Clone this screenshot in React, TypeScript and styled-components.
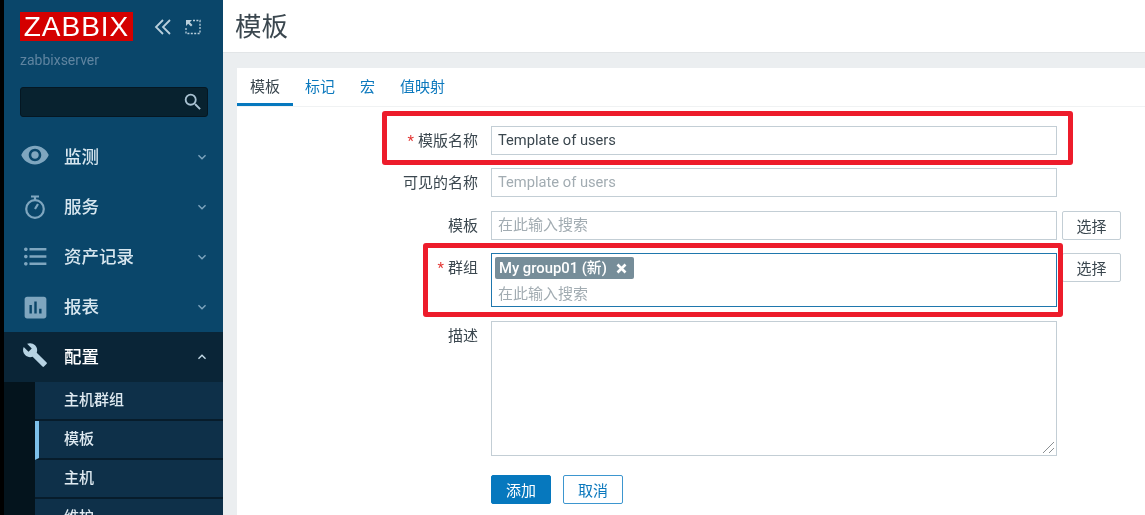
import { createGlobalStyle, styled } from 'styled-components';
import {
  MdAssessment,
  MdBuild,
  MdExpandLess,
  MdExpandMore,
  MdFormatListBulleted,
  MdRemoveRedEye,
  MdSearch,
} from 'react-icons/md';

const CJK = `Roboto, 'Noto Sans CJK SC', sans-serif`;

const GlobalStyle = createGlobalStyle`
  html, body {
    margin: 0;
    padding: 0;
    background: #ebeef0;
  }
  * {
    box-sizing: border-box;
  }
`;

const Page = styled.div`
  display: flex;
  width: 1145px;
  height: 515px;
  overflow: hidden;
  font-family: ${CJK};
  filter: blur(0.25px);
`;

const Sidebar = styled.aside`
  width: 223px;
  flex-shrink: 0;
  border-left: 4px solid #000;
  background: #0a466a;
  display: flex;
  flex-direction: column;
`;

const Brand = styled.div`
  flex-shrink: 0;
  display: flex;
  align-items: center;
  padding: 12px 0 0 16px;
`;

const Logo = styled.div`
  width: 113px;
  height: 29px;
  background: #d40000;
  color: #fff;
  font-family: 'Liberation Sans', sans-serif;
  font-size: 28px;
  line-height: 30px;
  letter-spacing: 1px;
  text-align: center;
`;

const BrandIcon = styled.svg<{ $gap: number }>`
  margin-left: ${(p) => p.$gap}px;
  color: #b9cfdc;
`;

const ServerName = styled.div`
  flex-shrink: 0;
  margin: 10px 0 0 16px;
  color: #5f84a0;
  font-size: 14px;
  line-height: 18px;
`;

const SearchBox = styled.div`
  flex-shrink: 0;
  margin: 18px 0 0 16px;
  width: 188px;
  height: 30px;
  background: #08222f;
  border: 1px solid #051722;
  border-radius: 3px;
  display: flex;
  justify-content: flex-end;
  align-items: center;
  padding-right: 3px;
  color: #a9c2d2;
  font-size: 22px;
`;

const Nav = styled.nav`
  flex-shrink: 0;
  margin-top: 15px;
  display: flex;
  flex-direction: column;
`;

const NavItem = styled.div<{ $open?: boolean }>`
  height: 50px;
  display: flex;
  align-items: center;
  background: ${(p) => (p.$open ? '#0a2537' : 'transparent')};
  color: ${(p) => (p.$open ? '#fff' : '#d7e6ef')};
  font-size: 17.5px;
  font-weight: 500;
`;

const NavIcon = styled.span<{ $open?: boolean; $lift?: number }>`
  width: 60px;
  flex-shrink: 0;
  padding-left: 2px;
  margin-bottom: ${(p) => p.$lift ?? 0}px;
  display: flex;
  justify-content: center;
  align-items: center;
  color: ${(p) => (p.$open ? '#b7d3e3' : '#7fa6bf')};
`;

const NavLabel = styled.span`
  flex: 1;
  margin-bottom: 3px;
`;

const NavChevron = styled.span<{ $open?: boolean }>`
  width: 24px;
  margin-right: 9px;
  display: flex;
  justify-content: center;
  font-size: 16px;
  color: ${(p) => (p.$open ? '#c5dbe8' : '#7fa6bf')};
`;

const SubNav = styled.div`
  flex: 1;
  min-height: 0;
  overflow: hidden;
  padding-left: 31px;
  background: #04141d;
`;

const SubItem = styled.div<{ $active?: boolean }>`
  height: 39px;
  padding-bottom: 4px;
  padding-left: ${(p) => (p.$active ? '25px' : '29px')};
  display: flex;
  align-items: center;
  background: #0e3049;
  border-bottom: 2px solid #071c2b;
  border-left: ${(p) => (p.$active ? '4px solid #7cc0ea' : 'none')};
  color: #dfeaf1;
  font-size: 15px;
  font-weight: 500;
`;

const Main = styled.main`
  flex: 1;
  min-width: 0;
  display: flex;
  flex-direction: column;
`;

const Header = styled.header`
  height: 53px;
  flex-shrink: 0;
  background: #fff;
  border-bottom: 1px solid #e2e5e7;
  padding: 0 0 3px 12px;
  display: flex;
  align-items: center;
`;

const Title = styled.h1`
  margin: 0;
  color: #3b474f;
  font-size: 26.5px;
  font-weight: 400;
`;

const Content = styled.div`
  flex: 1;
  padding: 15px 0 0 14px;
`;

const Panel = styled.section`
  height: 100%;
  background: #fff;
`;

const Tabs = styled.div`
  height: 39px;
  display: flex;
  border-bottom: 1px solid #f0f2f3;
`;

const Tab = styled.div<{ $active?: boolean }>`
  padding: 0 ${(p) => (p.$active ? '13px' : '0')};
  margin-right: ${(p) => (p.$active ? '12px' : '25px')};
  height: 38px;
  display: flex;
  align-items: center;
  font-size: 15px;
  color: ${(p) => (p.$active ? '#3b474f' : '#0b78bd')};
  border-bottom: 3px solid ${(p) => (p.$active ? '#0678be' : 'transparent')};
`;

const Form = styled.form`
  position: relative;
  padding-top: 19px;
  display: flex;
  flex-direction: column;
`;

const Row = styled.div<{ $gap?: number }>`
  display: grid;
  grid-template-columns: 241px 566px 64px;
  column-gap: 13px;
  margin-bottom: ${(p) => p.$gap ?? 13}px;
`;

const Label = styled.label`
  height: 29px;
  padding-top: 1px;
  line-height: 29px;
  text-align: right;
  font-size: 15px;
  color: #3b474f;
`;

const Required = styled.span`
  color: #e33734;
  margin-right: 4px;
`;

const Field = styled.div<{ $focus?: boolean; $height?: number }>`
  height: ${(p) => p.$height ?? 29}px;
  border: 1px solid ${(p) => (p.$focus ? '#1f77ad' : '#c3ced5')};
  padding: 0 6px;
  font-size: 14.7px;
  line-height: 27px;
  color: #3b474f;
  position: relative;
`;

const Placeholder = styled.span`
  color: #a2acb2;
  font-size: 14.7px;
`;

const SearchHint = styled(Placeholder)`
  font-size: 15px;
`;

const Tag = styled.div`
  margin: 3px 0 0 -3px;
  width: 139px;
  height: 22px;
  background: #768d99;
  border-radius: 2px;
  color: #fff;
  font-size: 14.8px;
  font-weight: 500;
  line-height: 22px;
  padding-left: 4px;
  display: flex;
  align-items: center;
  gap: 9px;
`;

const TagInput = styled.div`
  line-height: 22px;
  margin-top: 4px;
`;

const ResizeGrip = styled.svg`
  position: absolute;
  right: 1px;
  bottom: 1px;
`;

const SelectButton = styled.button`
  margin-left: -8px;
  width: 59px;
  height: 29px;
  background: #fff;
  border: 1px solid #c3ced5;
  border-radius: 2px;
  color: #3b474f;
  font-family: ${CJK};
  font-size: 15px;
  padding: 0;
`;

const Actions = styled.div`
  margin: 6px 0 0 254px;
  display: flex;
  gap: 12px;
`;

const ActionButton = styled.button<{ $primary?: boolean }>`
  width: 60px;
  height: 29px;
  padding: 0;
  border-radius: 2px;
  border: 1px solid ${(p) => (p.$primary ? '#0678be' : '#3d96cf')};
  background: ${(p) => (p.$primary ? '#0678be' : '#fff')};
  color: ${(p) => (p.$primary ? '#fff' : '#0b78bd')};
  font-family: ${CJK};
  font-size: 15px;
`;

const Highlight = styled.div<{ $top: number; $left: number; $width: number; $height: number }>`
  position: absolute;
  top: ${(p) => p.$top}px;
  left: ${(p) => p.$left}px;
  width: ${(p) => p.$width}px;
  height: ${(p) => p.$height}px;
  border: 5px solid #ed1c2b;
  border-radius: 3px;
  pointer-events: none;
`;

const navItems = [
  { label: '监测', lift: 4, icon: <MdRemoveRedEye size={30} /> },
  {
    label: '服务',
    lift: 0,
    icon: (
      <svg width="24" height="26" viewBox="0 0 24 26" fill="none" stroke="currentColor" strokeWidth="2.2">
        <circle cx="12" cy="15" r="8.8" />
        <path d="M8 2.5h8M12 2.5v4M12 15l3-5" />
      </svg>
    ),
  },
  { label: '资产记录', lift: 2, icon: <MdFormatListBulleted size={29} /> },
  { label: '报表', lift: 0, icon: <MdAssessment size={29} /> },
];

const subItems = ['主机群组', '模板', '主机', '维护'];

export default function App() {
  return (
    <Page>
      <GlobalStyle />
      <Sidebar>
        <Brand>
          <Logo>ZABBIX</Logo>
          <BrandIcon $gap={21} width="18" height="18" viewBox="0 0 18 18" fill="none" stroke="currentColor" strokeWidth="1.8">
            <path d="M9 2L2 9l7 7M16 2L9 9l7 7" />
          </BrandIcon>
          <BrandIcon $gap={13} width="16" height="16" viewBox="0 0 16 16" fill="none" stroke="currentColor" strokeWidth="1.3">
            <path d="M8 1.5h7v13H1V8" strokeDasharray="2 1.4" />
            <path d="M1 1h6L4.8 3.2 7.5 6 6 7.5 3.2 4.8 1 7z" fill="currentColor" stroke="none" />
          </BrandIcon>
        </Brand>
        <ServerName>zabbixserver</ServerName>
        <SearchBox>
          <MdSearch />
        </SearchBox>
        <Nav>
          {navItems.map((item) => (
            <NavItem key={item.label}>
              <NavIcon $lift={item.lift}>{item.icon}</NavIcon>
              <NavLabel>{item.label}</NavLabel>
              <NavChevron>
                <MdExpandMore />
              </NavChevron>
            </NavItem>
          ))}
          <NavItem $open>
            <NavIcon $open $lift={4}>
              <MdBuild size={26} />
            </NavIcon>
            <NavLabel>配置</NavLabel>
            <NavChevron $open>
              <MdExpandLess />
            </NavChevron>
          </NavItem>
        </Nav>
        <SubNav>
          {subItems.map((name) => (
            <SubItem key={name} $active={name === '模板'}>
              {name}
            </SubItem>
          ))}
        </SubNav>
      </Sidebar>
      <Main>
        <Header>
          <Title>模板</Title>
        </Header>
        <Content>
          <Panel>
            <Tabs>
              <Tab $active>模板</Tab>
              <Tab>标记</Tab>
              <Tab>宏</Tab>
              <Tab>值映射</Tab>
            </Tabs>
            <Form>
              <Row>
                <Label>
                  <Required>*</Required>模版名称
                </Label>
                <Field>Template of users</Field>
              </Row>
              <Row $gap={14}>
                <Label>可见的名称</Label>
                <Field>
                  <Placeholder>Template of users</Placeholder>
                </Field>
              </Row>
              <Row>
                <Label>模板</Label>
                <Field>
                  <SearchHint>在此输入搜索</SearchHint>
                </Field>
                <SelectButton type="button">选择</SelectButton>
              </Row>
              <Row $gap={14}>
                <Label>
                  <Required>*</Required>群组
                </Label>
                <Field $focus $height={54}>
                  <Tag>
                    My group01 (新)
                    <svg width="11" height="11" viewBox="0 0 11 11" stroke="#fff" strokeWidth="2.6">
                      <path d="M1.5 1.5l8 8M9.5 1.5l-8 8" />
                    </svg>
                  </Tag>
                  <TagInput>
                    <SearchHint>在此输入搜索</SearchHint>
                  </TagInput>
                </Field>
                <SelectButton type="button">选择</SelectButton>
              </Row>
              <Row>
                <Label>描述</Label>
                <Field $height={135}>
                  <ResizeGrip width="13" height="13" viewBox="0 0 13 13" stroke="#8a8f92" strokeWidth="1">
                    <path d="M1 12L12 1M7 12l5-5" />
                  </ResizeGrip>
                </Field>
              </Row>
              <Actions>
                <ActionButton type="button" $primary>
                  添加
                </ActionButton>
                <ActionButton type="button">取消</ActionButton>
              </Actions>
              <Highlight $top={4} $left={145} $width={691} $height={54} />
              <Highlight $top={136} $left={186} $width={640} $height={74} />
            </Form>
          </Panel>
        </Content>
      </Main>
    </Page>
  );
}
